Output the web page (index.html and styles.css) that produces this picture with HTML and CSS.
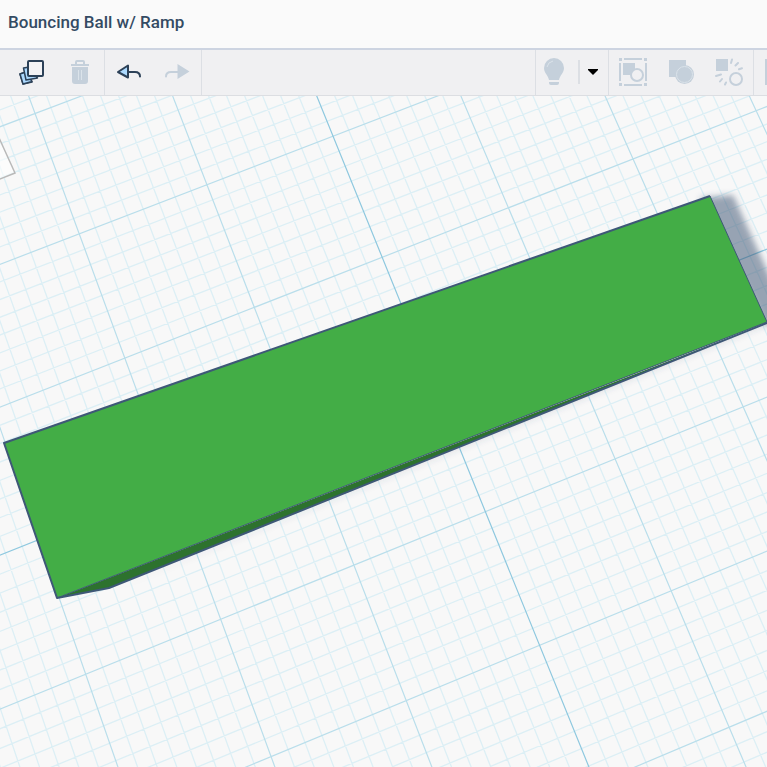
FILE: index.html
```html
<!DOCTYPE html>
<html lang="en">
<head>
<meta charset="utf-8">
<title>Bouncing Ball w/ Ramp</title>
<link rel="stylesheet" href="styles.css">
</head>
<body>
<header class="header"><h1 class="title">Bouncing Ball w/ Ramp</h1></header>
<div class="toolbar" role="toolbar">
  <div class="group group-first">
    <button class="tool" type="button" aria-label="Duplicate">
      <svg class="icon" viewBox="0 0 28 28"><path class="dark-line sheet" d="M2 16l3-1 9 9-9 2z"/><path class="dark-line sheet" d="M2 16l6-2 6 9.500L5 26z"/><path class="dark-line sheet" d="M5.500 10l6-1 8 11L8 22z"/><rect class="dark-line page" x="10" y="3" width="15" height="15" rx="1"/></svg>
    </button>
    <button class="tool" type="button" aria-label="Delete">
      <svg class="icon muted" viewBox="0 0 28 28"><path d="M9 6V4q0-2 2-2h6q2 0 2 2v2h4v2H5V6zM11 6h6V4h-6z" fill-rule="evenodd"/><path d="M6 9h16v14q0 3-3 3H9q-3 0-3-3z"/><path class="light-line" d="M12.500 12v10M15.500 12v10"/></svg>
    </button>
  </div>
  <div class="group">
    <button class="tool" type="button" aria-label="Undo">
      <svg class="icon" viewBox="0 0 28 28"><path class="dark-line paper" d="M3 14L13 7.500v12z"/><path class="dark-line none" d="M13 14h7q5 0 5 4.500"/></svg>
    </button>
    <button class="tool" type="button" aria-label="Redo">
      <svg class="icon muted" viewBox="0 0 28 28"><path d="M26.500 13.500L14.500 6v15z"/><path class="muted-line" d="M15 14H8q-5 0-5 4.500"/></svg>
    </button>
  </div>
  <div class="group group-right">
    <button class="tool tool-narrow" type="button" aria-label="Show all">
      <svg class="icon muted" viewBox="0 0 28 28"><path d="M14 0a10 10 0 0 0-10 10c0 5 4 7 5 12h10c1-5 5-7 5-12A10 10 0 0 0 14 0zM9 24h10v1q0 2-2 2h-6q-2 0-2-2z"/><path class="light-line" d="M7 9q1-5 6-6"/></svg>
    </button>
    <span class="rule"></span>
    <button class="tool tool-caret" type="button" aria-label="More"><svg class="caret" viewBox="0 0 10 6"><path d="M0 0h10v1L5 6 0 1z"/></svg></button>
  </div>
  <div class="group">
    <button class="tool" type="button" aria-label="Group">
      <svg class="icon muted" viewBox="0 0 28 28"><path d="M0 0h3v3H0zM25 0h3v3h-3zM0 25h3v3H0zM25 25h3v3h-3zM5 0h18v2H5zM5 26h18v2H5zM0 5h2v18H0zM26 5h2v18h-2zM4 5h12v12H4z"/><circle class="muted-line ring" cx="18" cy="17" r="6"/></svg>
    </button>
    <button class="tool" type="button" aria-label="Union">
      <svg class="icon muted" viewBox="0 0 28 28"><path d="M2 2h17v17H2z"/><circle cx="17.500" cy="16.500" r="9.500"/><circle class="light-line none" cx="17.500" cy="16.500" r="8"/></svg>
    </button>
    <button class="tool" type="button" aria-label="Ungroup">
      <svg class="icon muted" viewBox="0 0 28 28"><path d="M1 1h12v12H1z"/><circle class="muted-line none" cx="21" cy="21" r="6"/><path class="muted-line" d="M16 5l1-3.500M20.500 7.500L23 5M24 11.300l3-1.100M1 18l5-1.500M5 23.500l2-2.500M10 26.500l1-2"/></svg>
    </button>
  </div>
  <div class="group group-last">
    <button class="tool" type="button" aria-label="Align"><svg class="icon muted" viewBox="0 0 28 28"><path d="M1 1h2v26H1z"/></svg></button>
  </div>
</div>
<main class="stage">
  <svg class="scene" viewBox="0 96 767 671" preserveAspectRatio="xMidYMid slice" role="img" aria-label="Workplane with a green ramp">
    <defs>
      <filter id="soft" x="-20%" y="-20%" width="140%" height="140%"><feGaussianBlur stdDeviation="3"/></filter>
    </defs>
    <path id="minor" class="minor"/><path id="major" class="major"/><path id="axis" class="axis"/>
    <path class="label-card" d="M-20 96L15 173L-20 187z"/>
    <path class="faint-shadow" filter="url(#soft)" d="M110 590L767 325V315z"/>
    <path class="shadow" filter="url(#soft)" d="M700 198L733 195L790 321L765 325z"/>
    <path class="side" d="M57 598L109 588L767 323z"/>
    <path class="top" d="M4 443L710 196L767 322L57 598z"/>
    <path class="edge thin" d="M710 196L767 322M57 598L767 322"/>
    <path class="edge" d="M710 196L4 443L57 598L109 588L767 323"/>
  </svg>
</main>
<script src="grid.js"></script>
</body>
</html>
```
FILE: grid.js
```js
// Perspective workplane: [column, row, screen x, screen y] anchors define the camera.
const anchors = [
  [-2, -1, 35, 113.7], [-2, 0, 79.3, 233.7], [-1, 0, 207, 184.7], [0, 0, 333, 136],
  [0, 1, 382, 257.3], [1, 1, 508.3, 207.7], [2, 1, 633, 159.3], [3, 1, 756.3, 110.7],
  [-3, 3, 85.7, 674.3], [-2, 3, 220.7, 619.3], [-1, 3, 354, 565], [0, 3, 485.3, 511.7],
  [1, 3, 615.3, 458.7], [2, 3, 743.3, 407], [-2, 4, 271, 756.7], [-1, 4, 406.3, 701],
  [0, 4, 539.7, 644.7], [1, 4, 671, 591], [1, 5, 729, 727.3]
];

// Least-squares solution of the eight projection coefficients.
function solveCamera(points) {
  const m = Array.from({ length: 8 }, () => Array(9).fill(0));
  const add = (row) => {
    for (let i = 0; i < 8; i++) for (let j = 0; j < 9; j++) m[i][j] += row[i] * row[j];
  };
  for (const [u, v, x, y] of points) {
    add([u, v, 1, 0, 0, 0, -u * x, -v * x, x]);
    add([0, 0, 0, u, v, 1, -u * y, -v * y, y]);
  }
  for (let c = 0; c < 8; c++) {
    let p = c;
    for (let r = c; r < 8; r++) if (Math.abs(m[r][c]) > Math.abs(m[p][c])) p = r;
    [m[c], m[p]] = [m[p], m[c]];
    for (let r = 0; r < 8; r++) {
      if (r === c) continue;
      const f = m[r][c] / m[c][c];
      for (let k = c; k < 9; k++) m[r][k] -= f * m[c][k];
    }
  }
  return m.map((row, i) => row[8] / row[i]);
}

const cam = solveCamera(anchors);
const project = (u, v) => {
  const w = cam[6] * u + cam[7] * v + 1;
  return ((cam[0] * u + cam[1] * v + cam[2]) / w).toFixed(2) + " " +
    ((cam[3] * u + cam[4] * v + cam[5]) / w).toFixed(2);
};

const paths = { minor: "", major: "", axis: "" };
const min = -6, max = 7, divisions = 8;
for (let n = min * divisions; n <= max * divisions; n++) {
  const t = n / divisions;
  const column = n === 0 ? "axis" : n % divisions ? "minor" : "major";
  const row = t === 2 ? "axis" : n % divisions ? "minor" : "major";
  paths[column] += "M" + project(t, min) + "L" + project(t, max);
  paths[row] += "M" + project(min, t) + "L" + project(max, t);
}
for (const id in paths) document.getElementById(id).setAttribute("d", paths[id]);
```
FILE: styles.css
```css
* { box-sizing: border-box; }
body {
  margin: 0;
  height: 100vh;
  display: flex;
  flex-direction: column;
  overflow: hidden;
  background: #f8f8f8;
  font-family: Roboto, "Noto Sans", sans-serif;
}
.header {
  display: flex;
  align-items: center;
  height: 48px;
  padding: 0 8px 4px;
  background: #fafafa;
}
.title {
  margin: 0;
  color: #344b63;
  font-size: 17px;
  line-height: 24px;
  font-weight: 500;
}
.toolbar {
  display: flex;
  height: 48px;
  background: #f0f0f2;
  border-top: 2px solid #cdd4e1;
  border-bottom: 1px solid #dcdee2;
}
.group { display: flex; border-right: 1px solid #dcdfe4; }
.group-first { padding-left: 8px; }
.group-right { margin-left: auto; border-left: 1px solid #dcdfe4; }
.group-last { width: 13px; overflow: hidden; border: 0; }
.tool {
  display: flex;
  flex: none;
  align-items: center;
  justify-content: center;
  width: 48px;
  height: 44px;
  padding: 0;
  border: 0;
  background: none;
}
.tool-narrow { width: 36px; margin-right: 6px; }
.tool-caret { width: 28px; padding-right: 2px; }
.rule { width: 2px; height: 24px; margin-top: 10px; background: #dcdfe4; }
.icon { flex: none; width: 28px; height: 28px; }
.caret { width: 10px; height: 6px; }
.muted { fill: #c5d0db; }
.dark-line { stroke: #2c4158; stroke-width: 2; stroke-linejoin: round; stroke-linecap: round; }
.paper { fill: #addaff; }
.sheet { fill: #addaff; stroke-width: 1.5; }
.page { fill: #f3f3f5; }
.none { fill: none; }
.muted-line { fill: none; stroke: #c5d0db; stroke-width: 2; stroke-linecap: round; }
.ring { fill: #f0f0f2; }
.light-line { fill: none; stroke: #dbe3ea; stroke-width: 1; }
.stage { flex: 1; min-height: 0; }
.scene { display: block; width: 100%; height: 100%; }
.minor, .major, .axis, .edge { fill: none; }
.minor { stroke: #dceff5; stroke-width: 1.3; }
.major { stroke: #b9deeb; stroke-width: 1.2; }
.axis { stroke: #8ec8df; stroke-width: 1.2; }
.label-card { fill: #ffffff; fill-opacity: 0.6; stroke: #b9b9b9; stroke-width: 1.5; }
.shadow { fill: #3a506d; fill-opacity: 0.5; }
.faint-shadow { fill: #3a506d; fill-opacity: 0.15; }
.side { fill: #2d722e; }
.top { fill: #43ad46; }
.edge { stroke: #3e5877; stroke-width: 2; stroke-linejoin: round; }
.thin { stroke-width: 1; }
```
